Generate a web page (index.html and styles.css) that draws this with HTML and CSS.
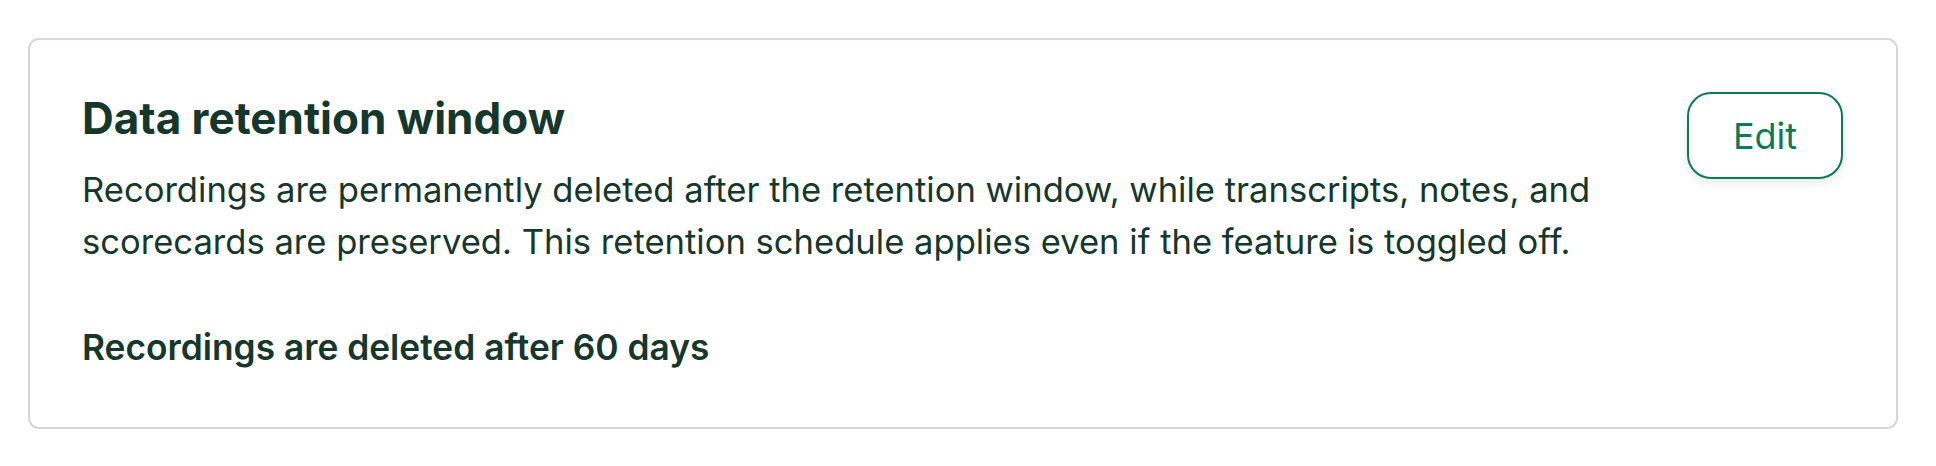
FILE: index.html
```html
<!DOCTYPE html>
<html lang="en">
<head>
<meta charset="utf-8">
<title>Data retention window</title>
<link rel="stylesheet" href="styles.css">
</head>
<body>
<main class="page">
  <section class="card">
    <div class="card-body">
      <h2 class="card-title">Data retention window</h2>
      <p class="card-text">Recordings are permanently deleted after the retention window, while transcripts, notes, and scorecards are preserved. This retention schedule applies even if the feature is toggled off.</p>
      <p class="card-status">Recordings are deleted after 60 days</p>
    </div>
    <button class="edit-btn" type="button">Edit</button>
  </section>
</main>
</body>
</html>
```
FILE: styles.css
```css
html, body {
  margin: 0;
  padding: 0;
  background: #ffffff;
}

body {
  font-family: "Inter", "Liberation Sans", sans-serif;
  color: #15372c;
}

.page {
  padding: 38px 38px 0 28px;
}

.card {
  display: flex;
  align-items: flex-start;
  gap: 48px;
  border: 2px solid #d3d8d6;
  border-radius: 11px;
  padding: 52px 53px 53px 52px;
  background: #ffffff;
}

.card-body {
  flex: 1 1 auto;
  min-width: 0;
}

.card-title {
  margin: 0;
  font-size: 44px;
  font-weight: 700;
  line-height: 52px;
  letter-spacing: 0;
}

.card-text {
  margin: 20px 0 0;
  font-size: 34.6px;
  font-weight: 400;
  line-height: 1.5;
}

.card-status {
  margin: 54px 0 0;
  font-size: 35.3px;
  font-weight: 600;
  line-height: 52.5px;
}

.edit-btn {
  flex: 0 0 auto;
  width: 156px;
  height: 87px;
  border: 2.5px solid #0d7a57;
  border-radius: 24px;
  background: #ffffff;
  color: #0d7a57;
  font-family: "Inter", "Liberation Sans", sans-serif;
  font-size: 36px;
  font-weight: 400;
  line-height: 1;
  padding: 0;
  box-shadow: 0 3px 9px rgba(21, 55, 44, 0.12);
  cursor: pointer;
}
```
